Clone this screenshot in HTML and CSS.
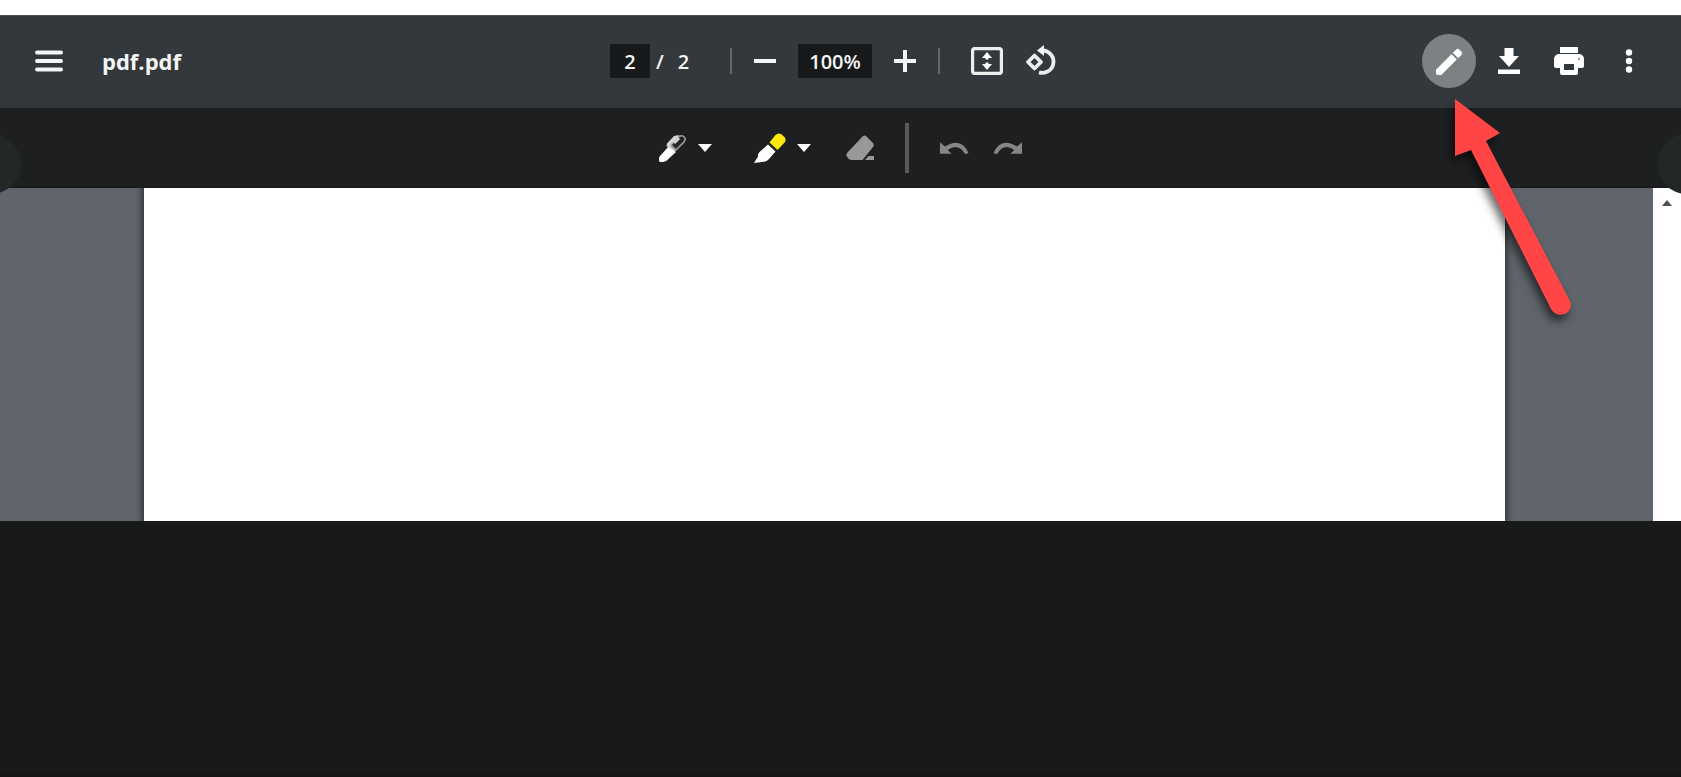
FILE: index.html
```html
<!DOCTYPE html>
<html lang="en">
<head>
  <meta charset="UTF-8">
  <title>pdf.pdf</title>
  <link rel="stylesheet" href="styles.css">
</head>
<body>

  <header class="toolbar">
    <div class="toolbar-start">
      <button class="icon-btn" aria-label="Menu">
        <svg width="30" height="24" viewBox="0 0 30 24"><path d="M3 3.500h24M3 12h24M3 20.500h24" stroke="#f4f5f5" stroke-width="4" stroke-linecap="round"/></svg>
      </button>
      <span class="file-name">pdf.pdf</span>
    </div>

    <div class="toolbar-center">
      <div class="pages">
        <input class="field page-field" type="text" value="2" aria-label="Page number">
        <span>/</span>
        <span>2</span>
      </div>
      <div class="zoom">
        <span class="divider"></span>
        <button class="zoom-btn" aria-label="Zoom out">
          <svg width="22" height="22" viewBox="0 0 22 22"><path d="M0 11h22" stroke="#f4f5f5" stroke-width="4"/></svg>
        </button>
        <input class="field zoom-field" type="text" value="100%" aria-label="Zoom level">
        <button class="zoom-btn" aria-label="Zoom in">
          <svg width="22" height="22" viewBox="0 0 22 22"><path d="M0 11h22M11 0v22" stroke="#f4f5f5" stroke-width="4"/></svg>
        </button>
        <span class="divider"></span>
      </div>
      <button class="icon-btn" aria-label="Fit to page">
        <svg width="32" height="28" viewBox="0 0 32 28">
          <rect x="1.500" y="1.500" width="29" height="25" rx="2.500" fill="none" stroke="#eceded" stroke-width="3.400"/>
          <path d="M16 5l5 6h-3.500v1.500h-3V11H11zM16 23l5-6h-3.500v-1.500h-3V17H11z" fill="#fff"/>
        </svg>
      </button>
      <button class="icon-btn" aria-label="Rotate">
        <svg width="32" height="32" viewBox="0 0 32 32">
          <path d="M9.500 10.500l6.500 6.500-6.500 6.500L3 17z" fill="none" stroke="#eceded" stroke-width="3.800" stroke-linejoin="round"/>
          <path d="M17.500 5.500a11.200 11.200 0 1 1-3.500 21.900" fill="none" stroke="#eceded" stroke-width="3.800"/>
          <path d="M19 0v11l-7-5.500z" fill="#f4f5f5"/>
        </svg>
      </button>
    </div>

    <div class="toolbar-end">
      <button class="icon-btn active" aria-label="Annotate">
        <svg width="27" height="27" viewBox="0 0 28 28"><path d="M0 22.500V26q0 2 2 2h3.500L21.500 12 16 6.500zM17.500 5l5.500 5.500 3.500-3.500a2.200 2.200 0 0 0 0-3L24 1.500a2.200 2.200 0 0 0-3 0z" fill="#fff"/></svg>
      </button>
      <button class="icon-btn" aria-label="Download">
        <svg width="22" height="26" viewBox="0 0 22 26"><path d="M6.500 0h9v8H21L11 19 1 8h5.500zM0 21.500h22V26H0z" fill="#fff"/></svg>
      </button>
      <button class="icon-btn" aria-label="Print">
        <svg width="30" height="28" viewBox="0 0 30 28">
          <path d="M6 0h18v6H6z" fill="#fff"/>
          <path d="M5 7h20a5 5 0 0 1 5 5v7q0 2-2 2h-4v5q0 2-2 2H8q-2 0-2-2v-5H2q-2 0-2-2v-7a5 5 0 0 1 5-5z" fill="#fff"/>
          <path d="M10 17h10v6H10z" fill="#33383c"/>
          <circle cx="25" cy="12" r="1.200" fill="#9a9d9f"/>
        </svg>
      </button>
      <button class="icon-btn" aria-label="More actions">
        <svg width="8" height="24" viewBox="0 0 8 24" fill="#fff"><circle cx="4" cy="3.500" r="3.200"/><circle cx="4" cy="12" r="3.200"/><circle cx="4" cy="20.500" r="3.200"/></svg>
      </button>
    </div>
  </header>

  <div class="annotation-bar">
    <div class="tool-group">
      <button class="tool" aria-label="Pen">
        <svg width="28" height="28" viewBox="0 0 28 28">
          <path d="M10 12l7 6-9.500 8.800Q5 28 3 28H1q-1.500-1-1-3-.2-2 1.500-3.500z" fill="#fff"/>
          <path d="M8 9.500L15 2l5-1-2 4-6 7.500 5 4-1.500 1L7.500 12z" fill="#d5d6d6"/>
          <path d="M12 11l8-8.500q4-2 6 1.500.5 2-1 4L17 16z" fill="#252628" stroke="#a3a5a5" stroke-width="1.500"/>
          <path d="M15 9l5-5" stroke="#d5d6d6" stroke-width="3"/>
        </svg>
        <svg width="14" height="8" viewBox="0 0 14 8"><path d="M0 0h14L7 8z" fill="#fff"/></svg>
      </button>
      <button class="tool" aria-label="Highlighter">
        <svg width="32" height="30" viewBox="0 0 32 30">
          <path d="M14 11.500l7.500 7L15 26q-2 2.500-5 2.800L0 30l4-6.500q-.5-2.500 1.500-4.500z" fill="#fff"/>
          <path d="M15.500 9.500l6-7.500q2.500-2.500 5.500-1l3.500 3q2 2.500.5 5l-7.500 8z" fill="#fde910"/>
        </svg>
        <svg width="14" height="8" viewBox="0 0 14 8"><path d="M0 0h14L7 8z" fill="#fff"/></svg>
      </button>
    </div>
    <button class="tool eraser" aria-label="Eraser">
      <svg width="28" height="26" viewBox="0 0 28 26"><path d="M16.500 1.500q2-2 4 0l6.500 6.500q1.500 2 0 4L16.500 25H5q-3-1-4.500-4-.5-2 1-3.500zM19 25l3.500-4H28v4z" fill="#97989a"/></svg>
    </button>
    <span class="tool-divider"></span>
    <div class="history">
      <button class="tool" aria-label="Undo">
        <svg width="29" height="14" viewBox="0 0 30 14"><path d="M0 1v12h12L8 9Q19 1 26 13.500l3.500-1.200Q22-5 5 5.500z" fill="#858688"/></svg>
      </button>
      <button class="tool" aria-label="Redo">
        <svg width="29" height="14" viewBox="0 0 30 14"><path d="M30 1v12H18l4-4Q11 1 4 13.500L.5 12.300Q8-5 25 5.500z" fill="#858688"/></svg>
      </button>
    </div>
  </div>

  <main class="viewer">
    <div class="document">
      <div class="page"></div>
    </div>
    <div class="scrollbar">
      <svg width="10" height="6" viewBox="0 0 10 6"><path d="M5 0l5 6H0z" fill="#505050"/></svg>
    </div>
  </main>

  <footer class="backdrop"></footer>

  <!-- carousel buttons, half outside the window -->
  <button class="slide-btn prev" aria-label="Previous"></button>
  <button class="slide-btn next" aria-label="Next"></button>

  <!-- pointer to the annotate button -->
  <svg class="pointer" width="150" height="240" viewBox="0 0 150 240">
    <path d="M15 9l45 34-14 8 84 160q3 8-5 13-9 3-14-5L31 60l-16 6z" fill="#ff4545"/>
  </svg>

</body>
</html>
```
FILE: styles.css
```css
* {
  box-sizing: border-box;
}
body {
  margin: 0;
  padding-top: 15px;
  min-height: 100vh;
  display: flex;
  flex-direction: column;
  position: relative;
  overflow: hidden;
  background: #fff;
  color: #f4f5f5;
  font-family: "Open Sans", "Noto Sans", sans-serif;
  font-size: 20px;
  font-weight: 600;
}
button {
  padding: 0;
  border: none;
  background: none;
  cursor: pointer;
}
svg {
  display: block;
}

/* top toolbar */
.toolbar {
  display: grid;
  grid-template-columns: 1fr auto 1fr;
  align-items: center;
  height: 93px;
  padding: 0 25px 2px 22px;
  background: #33383c;
  border-top: 1px solid #4b5553;
}
.toolbar-start,
.toolbar-center,
.pages,
.zoom,
.toolbar-end {
  display: flex;
  align-items: center;
}
.toolbar-start {
  gap: 26px;
}
.toolbar-end {
  justify-content: flex-end;
  gap: 6px;
}
.icon-btn {
  display: flex;
  align-items: center;
  justify-content: center;
  width: 54px;
  height: 54px;
  border-radius: 50%;
}
.icon-btn.active {
  background: #7c8184;
}
.file-name {
  font-size: 22px;
  font-weight: 700;
  line-height: 30px;
}
.pages {
  gap: 6px;
  width: 120px;
}
.pages span:last-child {
  margin-left: 8px;
}
.field {
  height: 34px;
  padding: 0;
  border: none;
  background: #17191b;
  color: #f4f5f5;
  font: inherit;
  text-align: center;
}
.page-field {
  width: 40px;
}
.zoom-field {
  width: 74px;
}
.zoom {
  gap: 16px;
  margin-right: 20px;
}
.zoom-btn {
  display: flex;
  justify-content: center;
  width: 34px;
}
.divider {
  width: 2px;
  height: 26px;
  background: #63676a;
}

/* drawing tools */
.annotation-bar {
  display: flex;
  align-items: center;
  justify-content: center;
  height: 80px;
  background: #1e1f21;
  border-bottom: 1px solid #17181a;
}
.tool-group,
.history {
  display: flex;
}
.tool-group {
  gap: 42px;
}
.history {
  gap: 24px;
}
.tool {
  display: flex;
  align-items: center;
  gap: 11px;
}
.eraser {
  margin-left: 35px;
}
.tool-divider {
  width: 4px;
  height: 50px;
  margin: 0 31px;
  background: #59595b;
}

/* document area */
.viewer {
  display: flex;
  height: 333px;
}
.document {
  flex: 1;
  padding: 0 148px 0 144px;
  background: #5f656b;
  overflow: hidden;
}
.page {
  height: 100%;
  background: #fff;
  box-shadow: 0 0 6px 2px #2b2f33;
}
.scrollbar {
  display: flex;
  justify-content: center;
  width: 28px;
  padding-top: 12px;
  background: #fff;
}
.backdrop {
  flex: 1;
  background: #171a19;
  border-bottom: 2px solid #161315;
}

/* overlays */
.slide-btn {
  position: absolute;
  top: 134px;
  width: 60px;
  height: 60px;
  border-radius: 50%;
  background: #232726;
}
.prev {
  left: -39px;
}
.next {
  right: -36px;
}
.pointer {
  position: absolute;
  top: 90px;
  right: 91px;
  overflow: visible;
  filter: drop-shadow(-3px 6px 5px rgba(0, 0, 0, 0.6));
}
```
